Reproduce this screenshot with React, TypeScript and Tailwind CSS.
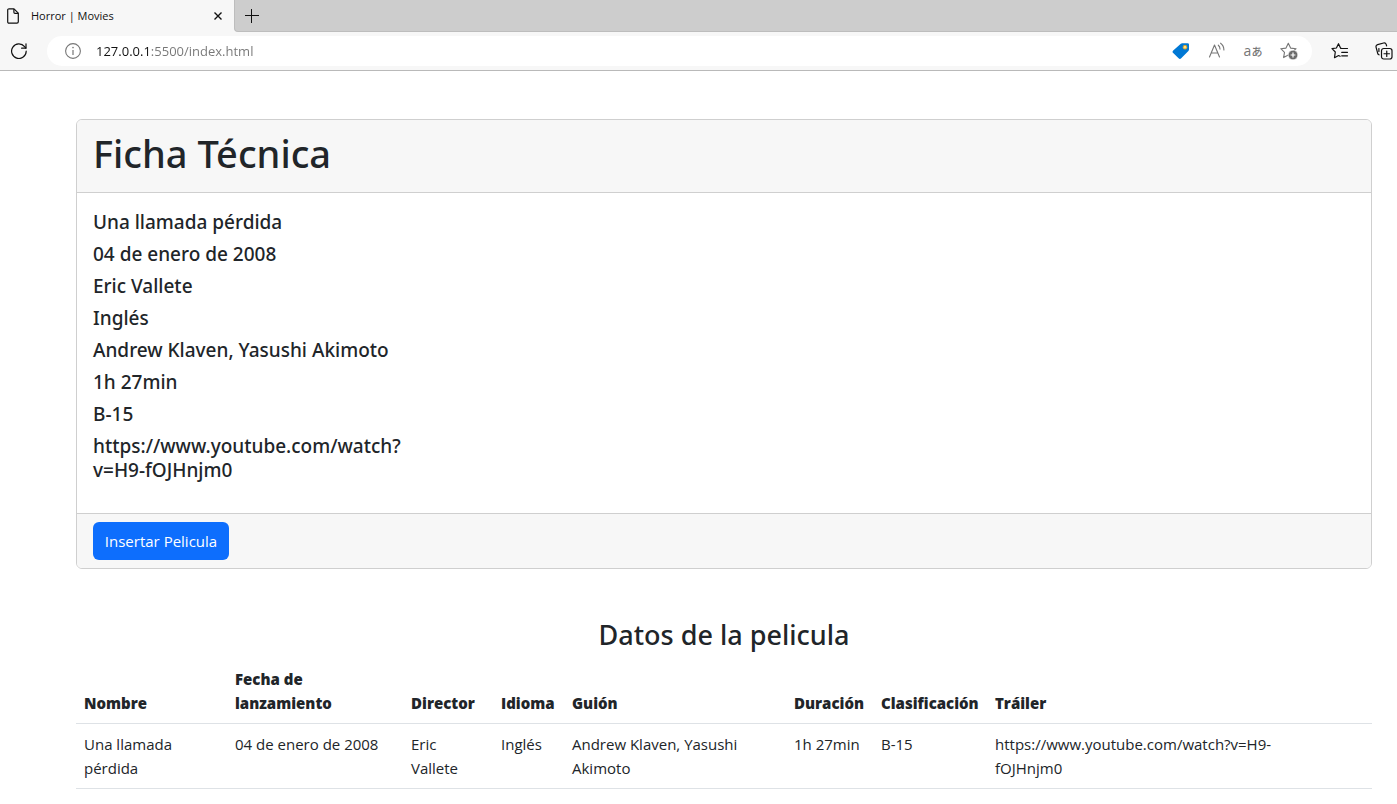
import React from "react";

const details = [
  "Una llamada pérdida",
  "04 de enero de 2008",
  "Eric Vallete",
  "Inglés",
  "Andrew Klaven, Yasushi Akimoto",
  "1h 27min",
  "B-15",
  "https://www.youtube.com/watch?v=H9-fOJHnjm0",
];

const headings = [
  "Nombre",
  "Fecha de lanzamiento",
  "Director",
  "Idioma",
  "Guión",
  "Duración",
  "Clasificación",
  "Tráiler",
];

const columnWidths = [
  "w-[151px]",
  "w-[176px]",
  "w-[90px]",
  "w-[71px]",
  "w-[222px]",
  "w-[87px]",
  "w-[114px]",
  "w-[305px]",
];

function FileIcon() {
  return (
    <svg width="12" height="16" viewBox="0 0 12 16" fill="none" stroke="#111" strokeWidth="1.2" strokeLinejoin="round">
      <path d="M2 .8h5l4.3 4.4v8.6a1.4 1.4 0 0 1-1.4 1.4H2a1.3 1.3 0 0 1-1.3-1.4V2.1A1.3 1.3 0 0 1 2 .8Z" />
      <path d="M6.9 1v3.2a1.1 1.1 0 0 0 1.1 1.1h3.1" />
    </svg>
  );
}

function CloseIcon() {
  return (
    <svg width="8" height="8" viewBox="0 0 8 8" stroke="#111" strokeWidth="1.4">
      <path d="m.5.5 7 7M7.5.5l-7 7" />
    </svg>
  );
}

function PlusIcon() {
  return (
    <svg width="14" height="14" viewBox="0 0 14 14" stroke="#111" strokeWidth="1">
      <path d="M0 6.5h14M6.500 0v14" />
    </svg>
  );
}

function ReloadIcon() {
  return (
    <svg width="16" height="16" viewBox="0 0 16 16" fill="none" stroke="#111" strokeWidth="1.2" strokeLinecap="round" strokeLinejoin="round">
      <path d="M15.2 8.2A7.3 7.3 0 1 1 13.600 3.600L14.800 5" />
      <path d="M15 .8V5.200h-4.400" />
    </svg>
  );
}

function InfoIcon() {
  return (
    <svg width="16" height="16" viewBox="0 0 16 16" fill="none" stroke="#767676" strokeWidth="1.1">
      <circle cx="8" cy="8" r="7.4" />
      <path d="M8 7v5" strokeWidth="1.2" />
      <circle cx="8" cy="4.6" r=".8" fill="#767676" stroke="none" />
    </svg>
  );
}

function TagIcon() {
  return (
    <svg width="18" height="18" viewBox="0 0 18 18">
      <path d="M10.200 1.200h5.400a1.400 1.400 0 0 1 1.400 1.400v4.900a2 2 0 0 1-.6 1.400l-7.200 7.400a1.800 1.800 0 0 1-2.600 0L1.200 11a1.800 1.800 0 0 1 0-2.600L8.800 1.700a2 2 0 0 1 1.400-.5Z" fill="#0078d4" />
      <circle cx="13" cy="5.200" r="1.900" fill="#ffe08a" stroke="#e0a21b" strokeWidth=".9" />
    </svg>
  );
}

function ReadAloudIcon() {
  return (
    <svg width="18" height="18" viewBox="0 0 18 18" fill="none" stroke="#767676" strokeWidth="1.1" strokeLinecap="round" strokeLinejoin="round">
      <path d="M1.500 15 6.500 3l5 12M3.300 11h6.500" />
      <path d="M10.300 3.200c1.100.9 1.700 2.200 1.700 3.900M12.600 1.200c2.100 1.500 3.300 3.700 3.300 6.800" />
    </svg>
  );
}

function StarPlusIcon() {
  return (
    <svg width="18" height="18" viewBox="0 0 18 18" fill="none" stroke="#767676" strokeWidth="1.1" strokeLinejoin="round">
      <path d="m8.300 1.300 2.300 4.800 5.500.6-4.100 3.800.9 5.200-4.600-2.600-4.700 2.500.9-5.200L.8 6.700 6 6.100Z" />
      <circle cx="13" cy="13" r="4.800" fill="#6b6b6b" stroke="#fff" strokeWidth=".6" />
      <path d="M13 10.600v4.800M10.600 13h4.800" stroke="#fff" strokeWidth="1.200" />
    </svg>
  );
}

function FavoritesIcon() {
  return (
    <svg width="18" height="18" viewBox="0 0 18 18" fill="none" stroke="#111" strokeWidth="1.200" strokeLinecap="round" strokeLinejoin="round">
      <path d="M10.600 6.500 9.500 6 7.500 1.700 5.400 6 1 6.700 4.300 10l-.8 5.700L7.600 13.500l1.500.8" />
      <path d="M9.800 6.500h6.700M10.700 10.300h5.800M10.700 13.800h5.800" />
    </svg>
  );
}

function CollectionsIcon() {
  return (
    <svg width="18" height="18" viewBox="0 0 18 18" fill="none" stroke="#111" strokeWidth="1.200" strokeLinecap="round" strokeLinejoin="round">
      <rect x="6.500" y="6.500" width="10.500" height="10.500" rx="2.200" />
      <path d="M11.750 9v5.500M9 11.750h5.500" />
      <path d="M4 12.800 2.900 12 1.100 5.300a2.200 2.200 0 0 1 1.500-2.700L8.600 1a2.200 2.200 0 0 1 2.600 1.400l.4 1.500" />
      <path d="M3.900 9.500V6.600" />
    </svg>
  );
}

function BrowserBar() {
  return (
    <header className="border-b border-[#b9b9b9] bg-[#f7f7f7]">
      <div className="flex h-8 bg-[#f7f7f7]">
        <div className="flex w-[234px] shrink-0 items-center gap-3 rounded-tr-md bg-[#f7f7f7] pr-3 pl-[7px]">
          <FileIcon />
          <span className="flex-1 font-['Open_Sans',sans-serif] text-[11px] leading-4 text-[#111]">Horror | Movies</span>
          <button type="button" aria-label="Cerrar pestaña" className="flex">
            <CloseIcon />
          </button>
        </div>
        <div className="flex flex-1 items-center rounded-bl-[4px] border-b border-l border-[#bdbdbd] bg-[#cdcdcd] pl-[10px]">
          <button type="button" aria-label="Nueva pestaña" className="flex">
            <PlusIcon />
          </button>
        </div>
      </div>
      <div className="flex h-[38px] items-center pr-[4px] pl-[11px]">
        <button type="button" aria-label="Actualizar" className="mr-5 flex">
          <ReloadIcon />
        </button>
        <div className="flex h-[30px] min-w-0 flex-1 items-center rounded-full bg-white pr-[14px] pl-[18px]">
          <InfoIcon />
          <input
            type="text"
            aria-label="Dirección"
            defaultValue="127.0.0.1:5500/index.html"
            className="ml-[15px] h-5 min-w-0 flex-1 bg-[linear-gradient(to_right,#111_54px,#767676_54px)] bg-clip-text font-['Open_Sans',sans-serif] text-[13px] leading-5 text-transparent outline-none"
          />
          <div className="flex items-center gap-[18px]">
            <button type="button" aria-label="Compras" className="flex"><TagIcon /></button>
            <button type="button" aria-label="Leer en voz alta" className="flex"><ReadAloudIcon /></button>
            <button type="button" aria-label="Traducir" className="flex w-[18px] items-baseline justify-center text-[#767676]">
              <span className="font-['Open_Sans',sans-serif] text-[14px] leading-[18px]">a</span>
              <span className="font-['Noto_Sans_CJK_JP',sans-serif] text-[11px] leading-[18px] font-medium">あ</span>
            </button>
            <button type="button" aria-label="Agregar a favoritos" className="flex"><StarPlusIcon /></button>
          </div>
        </div>
        <div className="ml-[19px] flex items-center gap-[26px]">
          <button type="button" aria-label="Favoritos" className="flex"><FavoritesIcon /></button>
          <button type="button" aria-label="Colecciones" className="flex"><CollectionsIcon /></button>
        </div>
      </div>
    </header>
  );
}

export default function App() {
  return (
    <div className="min-h-screen bg-white font-['Open_Sans',sans-serif] text-[15px] leading-6 text-[#212529]">
      <BrowserBar />
      <main className="pt-12 pr-[25px] pl-[76px]">
        <section className="overflow-hidden rounded-md border border-[#cfcfcf]">
          <div className="border-b border-[#cfcfcf] bg-[#f7f7f7] px-4 pt-[9px] pb-[15px]">
            <h1 className="font-['Noto_Sans',sans-serif] text-[38px] leading-[48px] font-medium">Ficha Técnica</h1>
          </div>
          <div className="px-4 pt-[17px] pb-[31px]">
            <div className="flex w-[324px] flex-col gap-2 font-['Noto_Sans',sans-serif]">
              {details.map((text) => (
                <h5 key={text} className="text-[19px] leading-6 font-medium">{text}</h5>
              ))}
            </div>
          </div>
          <div className="border-t border-[#cfcfcf] bg-[#f7f7f7] px-4 py-2">
            <button type="button" className="flex h-[38px] w-[136px] items-center justify-center rounded-md bg-[#0d6efd] text-white">
              Insertar Pelicula
            </button>
          </div>
        </section>

        <section className="pt-[49px]">
          <h3 className="mb-[7px] text-center font-['Noto_Sans',sans-serif] text-[27px] leading-[34px] font-medium">Datos de la pelicula</h3>
          <table className="w-full table-fixed border-collapse text-left">
            <colgroup>
              {columnWidths.map((width, i) => (
                <col key={i} className={width} />
              ))}
              <col />
            </colgroup>
            <thead>
              <tr className="border-b border-[#dee2e6] align-bottom">
                {headings.map((heading) => (
                  <th key={heading} scope="col" className="p-2 font-extrabold">{heading}</th>
                ))}
                <td />
              </tr>
            </thead>
            <tbody>
              <tr className="border-b border-[#dee2e6] align-top">
                {details.map((text) => (
                  <td key={text} className="p-2">{text}</td>
                ))}
                <td />
              </tr>
            </tbody>
          </table>
        </section>
      </main>
    </div>
  );
}
